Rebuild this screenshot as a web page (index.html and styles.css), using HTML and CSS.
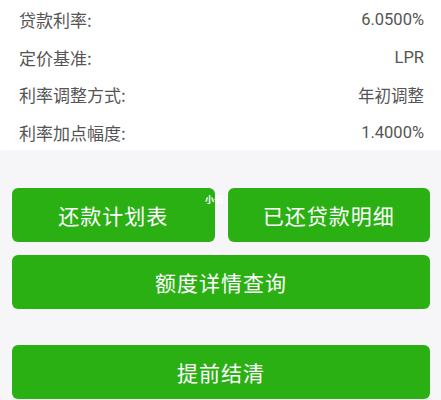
FILE: index.html
```html
<!DOCTYPE html>
<html lang="zh-CN">
  <head>
    <meta charset="UTF-8" />
    <meta name="viewport" content="width=device-width, initial-scale=1.0" />
    <title>贷款详情</title>
    <link rel="stylesheet" href="styles.css">
  </head>
  <body>
    <!-- loan info rows -->
    <div class="info">
      <div class="row"><span class="label">贷款利率:</span><span class="value">6.0500%</span></div>
      <div class="row"><span class="label">定价基准:</span><span class="value">LPR</span></div>
      <div class="row"><span class="label">利率调整方式:</span><span class="value">年初调整</span></div>
      <div class="row"><span class="label">利率加点幅度:</span><span class="value">1.4000%</span></div>
    </div>

    <!-- action buttons -->
    <div class="actions">
      <div class="btn-pair">
        <button class="btn">还款计划表</button>
        <button class="btn">已还贷款明细</button>
      </div>
      <button class="btn">额度详情查询</button>
      <button class="btn btn-last">提前结清</button>
      <span class="mark">小书</span>
    </div>
  </body>
</html>
```

FILE: styles.css
```css
body {
  margin: 0;
  background: #f6f6f8;
  font-family: "Noto Sans CJK SC", "Noto Sans", sans-serif;
}

.info {
  background: #fff;
  padding: 1px 17px 0 19px;
  height: 149px;
}

.row {
  display: flex;
  justify-content: space-between;
  align-items: center;
  height: 37.5px;
  font-size: 17px;
  color: #555;
}

.value {
  font-family: Roboto, "Noto Sans CJK SC", sans-serif;
  font-size: 16.5px;
}

.actions {
  position: relative;
  display: flex;
  flex-direction: column;
  gap: 13px;
  padding: 38px 11px 0 12px;
}

.btn-pair {
  display: flex;
  gap: 13px;
}

.btn-pair .btn {
  flex: 1;
}

.btn {
  height: 54px;
  border: none;
  border-radius: 6px;
  background: #2bb014;
  color: #fff;
  font-family: "Noto Sans CJK SC", sans-serif;
  font-size: 21px;
  letter-spacing: 1px;
  padding: 0;
}

.btn-last {
  margin-top: 23px;
}

/* faint watermark over the gap */
.mark {
  position: absolute;
  left: 205px;
  top: 43px;
  font-size: 9px;
  font-weight: bold;
  color: #fff;
  white-space: nowrap;
}
```
